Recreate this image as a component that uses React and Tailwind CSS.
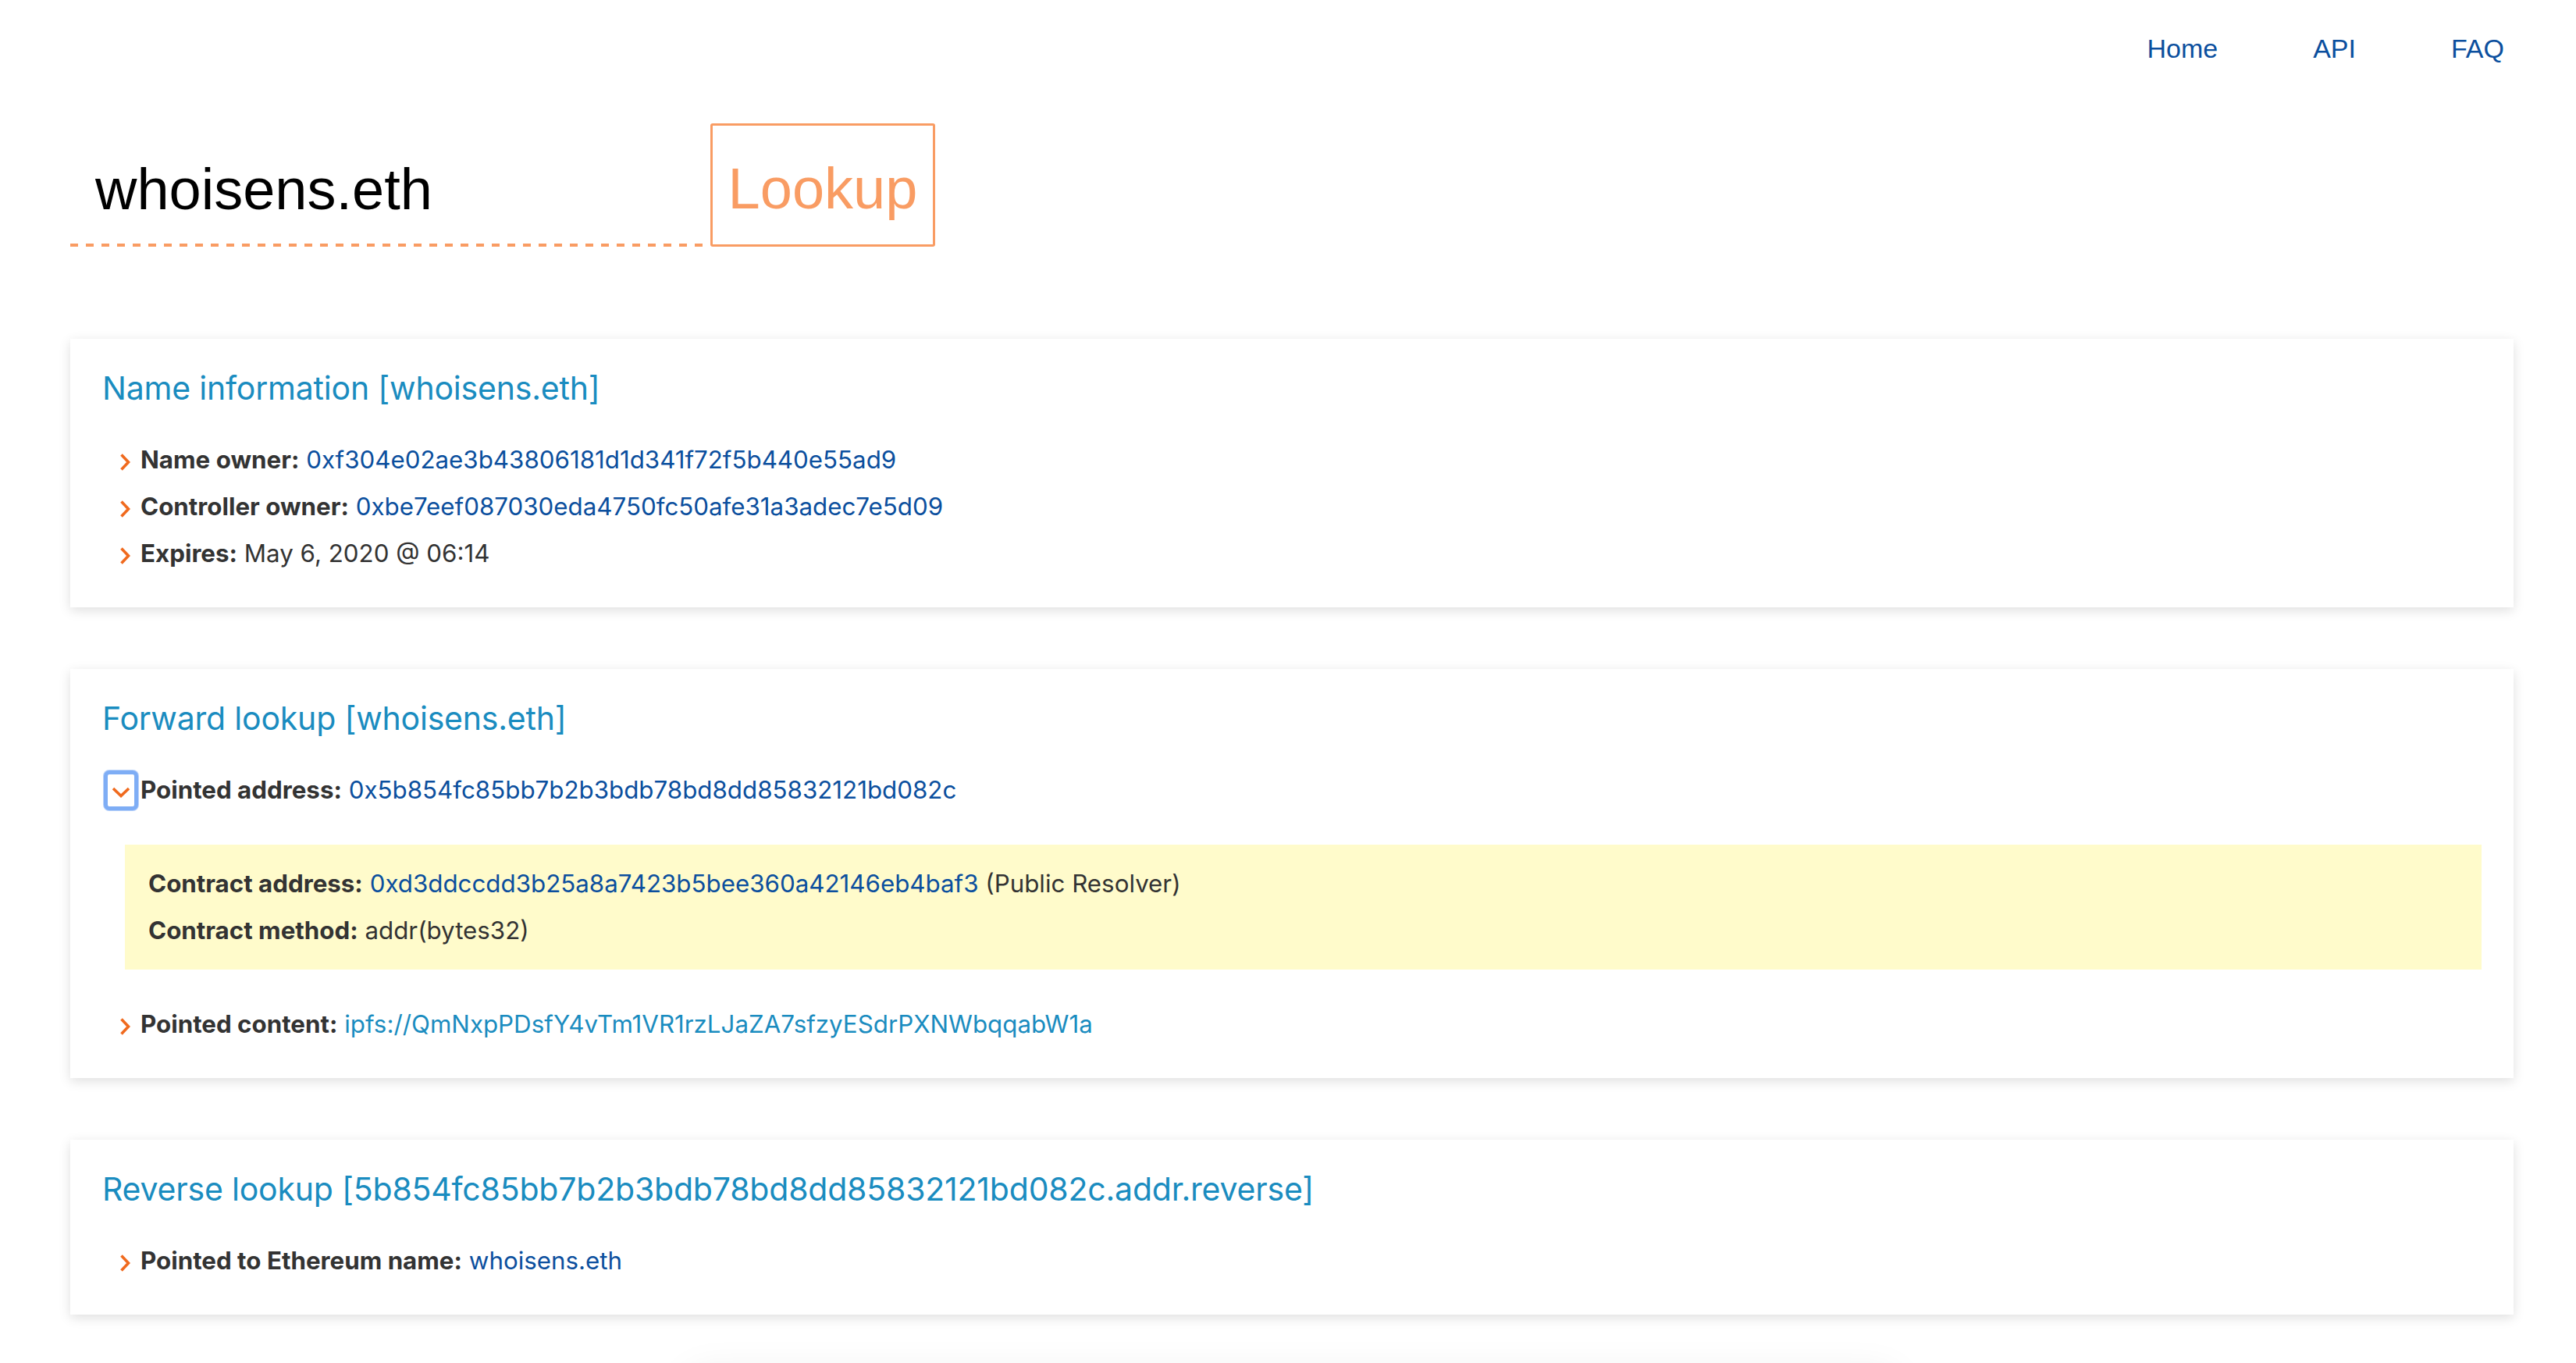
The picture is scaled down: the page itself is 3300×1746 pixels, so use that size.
import { useState } from "react";

const ORANGE = "#f06a1e";

function ChevronRight() {
  return (
    <svg width="14" height="22" viewBox="0 0 14 22" className="block translate-y-[3px]" aria-hidden="true">
      <path d="M2.5 1.5 L11.5 11 L2.5 20.5" fill="none" stroke={ORANGE} strokeWidth="3.6" />
    </svg>
  );
}

function ChevronDown() {
  return (
    <svg width="24" height="14" viewBox="0 0 24 14" className="block translate-y-[3px]" aria-hidden="true">
      <path d="M2 2 L12 11.5 L22 2" fill="none" stroke={ORANGE} strokeWidth="3.6" />
    </svg>
  );
}

function Row({ children }) {
  return (
    <div className="flex h-[60px] items-center">
      <span className="flex w-[49px] shrink-0 items-center pl-[22px]">
        <ChevronRight />
      </span>
      <div className="whitespace-nowrap leading-[60px]">{children}</div>
    </div>
  );
}

function Label({ children }) {
  return <b className="font-bold text-[#333333]">{children}</b>;
}

function Value({ children, light }) {
  return (
    <a href="#" className={light ? "text-[#1a8cc0]" : "text-[#0b4f9e]"}>
      {children}
    </a>
  );
}

function Card({ title, children }) {
  return (
    <section className="bg-white px-[41px] pt-[39px] pb-[39px] shadow-[0_4px_14px_rgba(0,0,0,0.13)]">
      <h2 className="h-[48px] whitespace-nowrap text-[41px] leading-[48px] tracking-[-0.2px] text-[#1a8cc0]">
        {title}
      </h2>
      <div className="mt-[38px]">{children}</div>
    </section>
  );
}

export default function App() {
  const [open, setOpen] = useState(true);

  return (
    <div className="min-h-screen overflow-hidden bg-white font-['Inter',sans-serif] text-[31.3px] text-[#333333]">
      <nav className="flex justify-end gap-[122px] pt-[42px] pr-[92px] font-['Liberation_Sans',Arial,sans-serif] text-[34px] leading-[40px] text-[#0b4f9e]">
        <a href="#">Home</a>
        <a href="#">API</a>
        <a href="#">FAQ</a>
      </nav>

      <div className="pl-[90px] pr-[80px]">
        <form className="mt-[76px] flex items-end font-['Liberation_Sans',Arial,sans-serif]" onSubmit={(e) => e.preventDefault()}>
          <div className="h-[158px] w-[820px] bg-[linear-gradient(to_right,#f99c63_50%,transparent_50%)] bg-[length:20px_4px] bg-bottom bg-repeat-x">
            <input
              readOnly
              value="whoisens.eth"
              className="h-[154px] w-full bg-transparent pt-[14px] pl-[32px] text-[74px] text-black outline-none"
            />
          </div>
          <button
            type="submit"
            className="flex h-[158px] w-[288px] items-center justify-center rounded-[3px] border-[3px] border-[#f99c63] pt-[8px] text-[74px] text-[#f99c63]"
          >
            Lookup
          </button>
        </form>

        <div className="mt-[118px] flex flex-col gap-[79px]">
          <Card title="Name information [whoisens.eth]">
            <Row>
              <Label>Name owner:</Label> <Value>0xf304e02ae3b43806181d1d341f72f5b440e55ad9</Value>
            </Row>
            <Row>
              <Label>Controller owner:</Label> <Value>0xbe7eef087030eda4750fc50afe31a3adec7e5d09</Value>
            </Row>
            <Row>
              <Label>Expires:</Label> May 6, 2020 @ 06:14
            </Row>
          </Card>

          <Card title="Forward lookup [whoisens.eth]">
            <div className="flex h-[60px] items-center">
              <button
                type="button"
                onClick={() => setOpen(!open)}
                className="ml-[2px] mr-[3px] flex h-[51px] w-[44px] shrink-0 items-center justify-center rounded-[7px] border-[5px] border-[#7eadf5] bg-white shadow-[0_0_0_1px_#b8d1fa]"
              >
                <ChevronDown />
              </button>
              <div className="whitespace-nowrap leading-[60px]">
                <Label>Pointed address:</Label> <Value>0x5b854fc85bb7b2b3bdb78bd8dd85832121bd082c</Value>
              </div>
            </div>

            {open ? (
              <div className="my-[40px] ml-[29px] bg-[#fffbcb] py-[20px] pl-[30px]">
                <div className="whitespace-nowrap leading-[60px]">
                  <Label>Contract address:</Label> <Value>0xd3ddccdd3b25a8a7423b5bee360a42146eb4baf3</Value> (Public Resolver)
                </div>
                <div className="whitespace-nowrap leading-[60px]">
                  <Label>Contract method:</Label> addr(bytes32)
                </div>
              </div>
            ) : null}

            <Row>
              <Label>Pointed content:</Label> <Value light>ipfs://QmNxpPDsfY4vTm1VR1rzLJaZA7sfzyESdrPXNWbqqabW1a</Value>
            </Row>
          </Card>

          <Card title="Reverse lookup [5b854fc85bb7b2b3bdb78bd8dd85832121bd082c.addr.reverse]">
            <Row>
              <Label>Pointed to Ethereum name:</Label> <Value>whoisens.eth</Value>
            </Row>
          </Card>

          <div className="mx-auto h-[300px] w-[1540px] bg-white shadow-[0_0_50px_rgba(0,0,0,0.09)]" />
        </div>
      </div>
    </div>
  );
}
